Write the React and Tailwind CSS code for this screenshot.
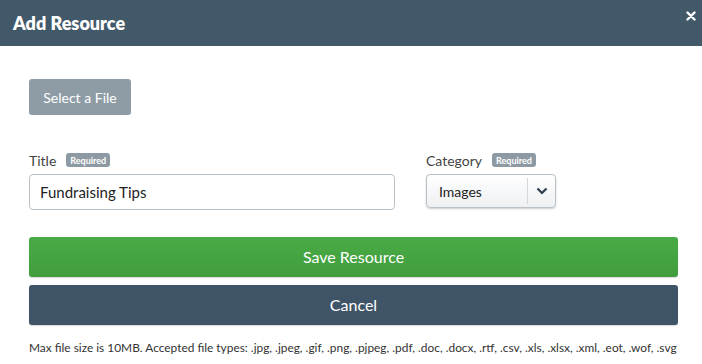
import React, { useState } from "react";

function RequiredBadge() {
  return (
    <span className="ml-[10px] inline-flex h-[14px] items-center rounded-[3px] bg-[#8e9aa3] px-[4px] text-[9px] font-bold leading-none text-white">
      Required
    </span>
  );
}

export default function App() {
  const [title, setTitle] = useState("Fundraising Tips");

  return (
    <div
      className="w-[702px] h-[364px] overflow-hidden bg-white"
      style={{ fontFamily: '"Lato", "Liberation Sans", sans-serif' }}
    >
      {/* Header */}
      <div className="flex h-[46px] items-center justify-between bg-[#42596a] pl-[13px] pr-[6px]">
        <h1 className="text-[18px] font-extrabold text-white">Add Resource</h1>
        <button className="-mt-[14px] text-[14px] font-bold text-white">
          <svg width="10" height="10" viewBox="0 0 10 10">
            <path d="M1.5 1.5 L8.5 8.5 M8.5 1.5 L1.5 8.5" stroke="white" strokeWidth="2.4" strokeLinecap="round" />
          </svg>
        </button>
      </div>

      <div className="pl-[29px] pr-[24px] pt-[33px]">
        {/* Select file */}
        <button className="h-[36px] w-[102px] rounded-[3px] bg-[#8e9ca6] text-[14px] text-white">
          Select a File
        </button>

        {/* Fields */}
        <div className="mt-[38px] flex gap-[31px]">
          <div className="flex flex-col">
            <label className="flex h-[14px] items-center text-[14px] text-[#444]">
              Title
              <RequiredBadge />
            </label>
            <input
              value={title}
              onChange={(e) => setTitle(e.target.value)}
              className="mt-[7px] h-[36px] w-[366px] rounded-[4px] border border-[#b9c1c8] px-[10px] text-[15px] text-[#222] outline-none"
            />
          </div>
          <div className="flex flex-col">
            <label className="flex h-[14px] items-center text-[14px] text-[#444]">
              Category
              <RequiredBadge />
            </label>
            <div className="mt-[7px] flex h-[34px] w-[130px] items-center rounded-[4px] border border-[#b9c1c8] bg-gradient-to-b from-white to-[#eef0f2] shadow-[0_1px_2px_rgba(0,0,0,0.2)]">
              <span className="flex-1 pl-[12px] text-[14px] text-[#222]">Images</span>
              <span className="h-[26px] w-px bg-[#d3d8dc]" />
              <span className="flex w-[27px] items-center justify-center">
                <svg width="12" height="8" viewBox="0 0 12 8">
                  <path d="M1.5 1.5 L6 6 L10.5 1.5" fill="none" stroke="#2c3e4c" strokeWidth="2.2" />
                </svg>
              </span>
            </div>
          </div>
        </div>

        {/* Actions */}
        <button className="mt-[27px] flex h-[40px] w-full items-center justify-center rounded-[3px] bg-gradient-to-b from-[#49ab45] to-[#419d3e] text-[16px] text-white shadow-[0_1px_1px_rgba(0,0,0,0.15)]">
          Save Resource
        </button>
        <button className="mt-[8px] flex h-[40px] w-full items-center justify-center rounded-[3px] bg-[#3f5567] text-[16px] text-white shadow-[0_1px_1px_rgba(0,0,0,0.15)]">
          Cancel
        </button>

        <p className="mt-[15px] whitespace-nowrap text-[11.9px] leading-[16px] text-[#333]">
          Max file size is 10MB. Accepted file types: .jpg, .jpeg, .gif, .png, .pjpeg, .pdf, .doc, .docx, .rtf, .csv, .xls, .xlsx, .xml, .eot, .wof, .svg
        </p>
      </div>
    </div>
  );
}
